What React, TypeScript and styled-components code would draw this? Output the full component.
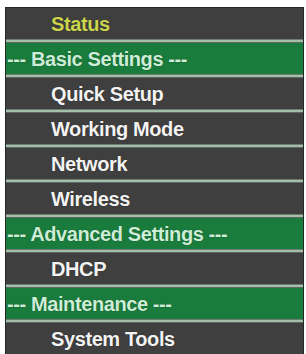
import React from 'react';
import styled, { createGlobalStyle } from 'styled-components';

const GlobalStyle = createGlobalStyle`
    html, body {
        margin: 0;
        padding: 0;
        background: #ffffff;
    }
`;

const Page = styled.div`
    width: 306px;
    height: 354px;
    overflow: hidden;
    background: #ffffff;
    padding: 7px 2px 0 5px;
    box-sizing: border-box;
`;

const Panel = styled.div`
    display: flex;
    flex-direction: column;
    border: 1px solid #262626;
    border-bottom: none;
    background: #3e3e3e;
    font-family: 'Liberation Sans', Arial, sans-serif;
    font-weight: bold;
    font-size: 20px;
    letter-spacing: -0.4px;
`;

const Row = styled.div<{ $kind: 'item' | 'header' | 'active' }>`
    height: 31px;
    line-height: 32px;
    white-space: nowrap;
    overflow: hidden;
    padding-left: ${(p) => (p.$kind === 'header' ? '1px' : '45px')};
    background: ${(p) => (p.$kind === 'header' ? '#197c3c' : '#403f3f')};
    color: ${(p) =>
        p.$kind === 'header' ? '#cdeed6' : p.$kind === 'active' ? '#cbd64c' : '#f3f3f3'};
    text-shadow: 0 0 1px rgba(0, 0, 0, 0.6);
`;

const Divider = styled.div`
    height: 4px;
    background: linear-gradient(#6f7c72 0, #6f7c72 1px, #a3bea9 1px, #a3bea9 3px, #5f6661 3px);
`;

const menu: { label: string; kind: 'item' | 'header' | 'active' }[] = [
    { label: 'Status', kind: 'active' },
    { label: '--- Basic Settings ---', kind: 'header' },
    { label: 'Quick Setup', kind: 'item' },
    { label: 'Working Mode', kind: 'item' },
    { label: 'Network', kind: 'item' },
    { label: 'Wireless', kind: 'item' },
    { label: '--- Advanced Settings ---', kind: 'header' },
    { label: 'DHCP', kind: 'item' },
    { label: '--- Maintenance ---', kind: 'header' },
    { label: 'System Tools', kind: 'item' },
];

const App: React.FunctionComponent<{}> = () => {
    return (
        <Page>
            <GlobalStyle />
            <Panel>
                {menu.map(({ label, kind }, i) => (
                    <React.Fragment key={label}>
                        {i > 0 && <Divider />}
                        <Row $kind={kind}>{label}</Row>
                    </React.Fragment>
                ))}
            </Panel>
        </Page>
    );
};

export default App;
